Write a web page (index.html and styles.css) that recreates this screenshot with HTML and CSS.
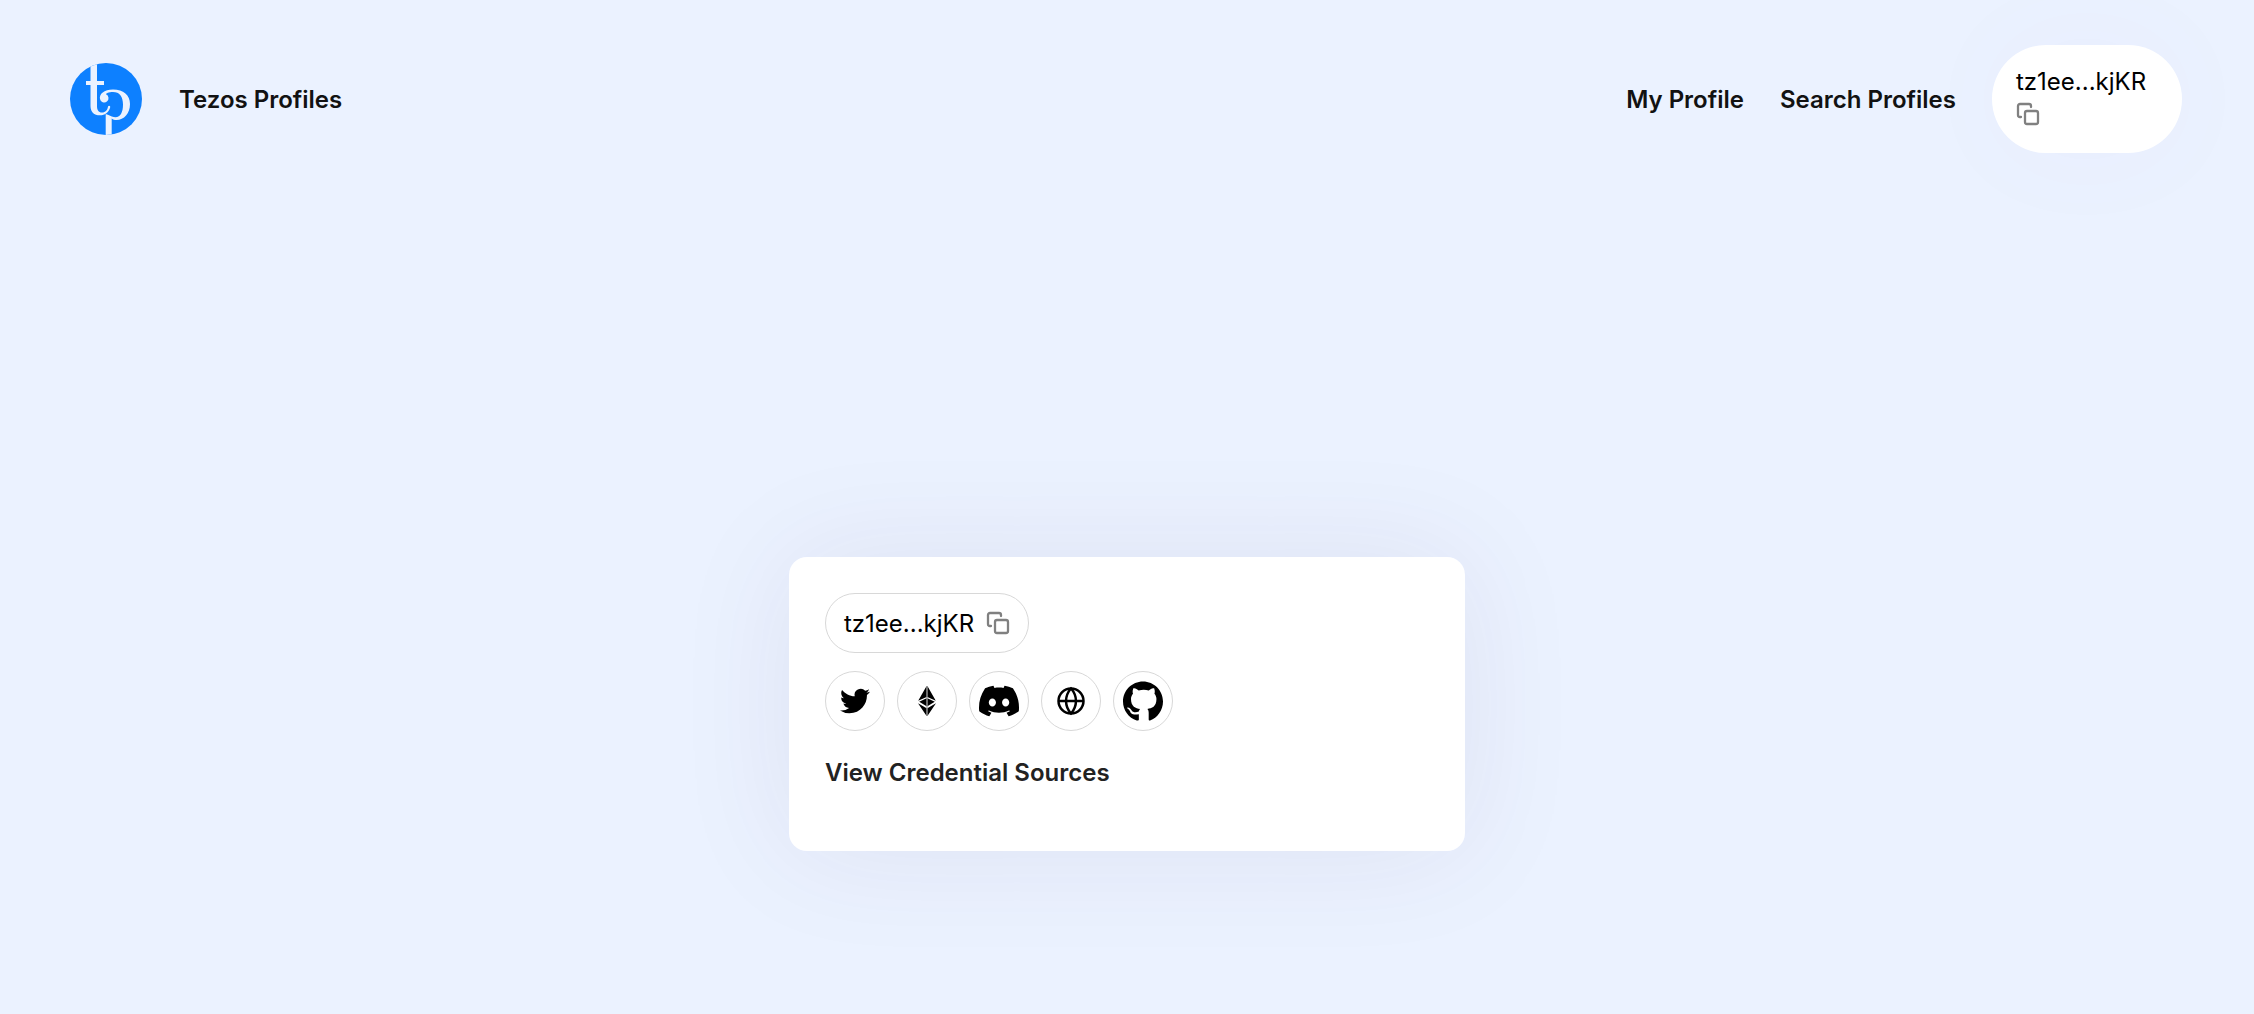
FILE: index.html
```
<!DOCTYPE html>
<html lang="en">
  <head>
    <meta charset="UTF-8" />
    <meta name="viewport" content="width=device-width, initial-scale=1.0" />
    <title>Tezos Profiles</title>
    <link rel="stylesheet" href="styles.css">
  </head>
  <body>
    <svg class="sprite" aria-hidden="true">
      <symbol id="icon-copy" viewBox="0 0 24 24">
        <g fill="none" stroke="currentColor" stroke-width="2.3" stroke-linecap="round" stroke-linejoin="round">
          <rect x="9" y="9" width="13" height="13" rx="2" />
          <path d="M5 15H4a2 2 0 0 1-2-2V4a2 2 0 0 1 2-2h9a2 2 0 0 1 2 2v1" />
        </g>
      </symbol>
    </svg>

    <header class="header">
      <a class="brand" href="#">
        <svg class="brand-logo" viewBox="0 0 72 72" aria-hidden="true">
          <defs>
            <clipPath id="disc"><circle cx="36" cy="36" r="36" /></clipPath>
          </defs>
          <circle class="logo-disc" cx="36" cy="36" r="36" />
          <g class="logo-mark" clip-path="url(#disc)">
            <path d="M20.500 0H27V43C27 47 28.500 49.500 32 49.500C35.500 49.500 37.500 47 38 43.500C38.500 42 41 42.500 40 45C38.500 49.500 35 52.300 30 52.300C24 52.300 20.500 49 20.500 43Z" />
            <rect x="16" y="18" width="18" height="4" />
            <path d="M30 36C29 31 34 26.500 43 26.500C53.500 26.500 60 32 60 41C60 50.500 54 57 46.500 57C44.500 57 43 56.500 41.700 55.500V72H35.700V51L38.500 52C40.500 53 43 54.300 45.500 54.300C50.500 54.300 53 49 53 41.500C53 33.500 49.500 29 43 29C38.500 29 36 30.300 36 31.300A4.300 4.300 0 1 1 30 36Z" />
          </g>
        </svg>
        <span>Tezos Profiles</span>
      </a>
      <nav class="nav">
        <a href="#">My Profile</a>
        <a href="#">Search Profiles</a>
        <button class="account" type="button">
          <span>tz1ee...kjKR</span>
          <svg class="icon-copy" aria-hidden="true"><use href="#icon-copy" /></svg>
        </button>
      </nav>
    </header>

    <main class="main">
      <section class="card">
        <button class="address" type="button">
          <span>tz1ee...kjKR</span>
          <svg class="icon-copy" aria-hidden="true"><use href="#icon-copy" /></svg>
        </button>

        <div class="socials">
          <a class="social" href="#" aria-label="Twitter">
            <svg class="icon-medium" viewBox="0 0 24 24">
              <path d="M23.953 4.57a10 10 0 01-2.825.775 4.958 4.958 0 002.163-2.723c-.951.555-2.005.959-3.127 1.184a4.92 4.92 0 00-8.384 4.482C7.69 8.095 4.067 6.13 1.64 3.162a4.822 4.822 0 00-.666 2.475c0 1.71.87 3.213 2.188 4.096a4.904 4.904 0 01-2.228-.616v.06a4.923 4.923 0 003.946 4.827 4.996 4.996 0 01-2.212.085 4.936 4.936 0 004.604 3.417 9.867 9.867 0 01-6.102 2.105c-.39 0-.779-.023-1.17-.067a13.995 13.995 0 007.557 2.209c9.053 0 13.998-7.496 13.998-13.985 0-.21 0-.42-.015-.63A9.935 9.935 0 0024 4.59z" />
            </svg>
          </a>
          <a class="social" href="#" aria-label="Ethereum">
            <svg class="icon-medium" viewBox="0 0 30 30">
              <path d="M14.600 0V11L6.200 14.700ZM15.400 0V11L23.800 14.700ZM14.600 12.200V20.300L7.200 15.800ZM15.400 12.200V20.300L22.800 15.800ZM14.600 22.300V30L6 17.200ZM15.400 22.300V30L24 17.200Z" />
              <path class="eth-line" d="M15 0V30" />
            </svg>
          </a>
          <a class="social" href="#" aria-label="Discord">
            <svg class="icon-large" viewBox="0 0 24 24">
              <path d="M20.317 4.3698a19.7913 19.7913 0 00-4.8851-1.5152.0741.0741 0 00-.0785.0371c-.211.3753-.4447.8648-.6083 1.2495-1.8447-.2762-3.68-.2762-5.4868 0-.1636-.3933-.4058-.8742-.6177-1.2495a.077.077 0 00-.0785-.037 19.7363 19.7363 0 00-4.8852 1.515.0699.0699 0 00-.0321.0277C.5334 9.0458-.319 13.5799.0992 18.0578a.0824.0824 0 00.0312.0561c2.0528 1.5076 4.0413 2.4228 5.9929 3.0294a.0777.0777 0 00.0842-.0276c.4616-.6304.8731-1.2952 1.226-1.9942a.076.076 0 00-.0416-.1057c-.6528-.2476-1.2743-.5495-1.8722-.8923a.077.077 0 01-.0076-.1277c.1258-.0943.2517-.1923.3718-.2914a.0743.0743 0 01.0776-.0105c3.9278 1.7933 8.18 1.7933 12.0614 0a.0739.0739 0 01.0785.0095c.1202.099.246.1981.3728.2924a.077.077 0 01-.0066.1276 12.2986 12.2986 0 01-1.873.8914.0766.0766 0 00-.0407.1067c.3604.698.7719 1.3628 1.225 1.9932a.076.076 0 00.0842.0286c1.961-.6067 3.9495-1.5219 6.0023-3.0294a.077.077 0 00.0313-.0552c.5004-5.177-.8382-9.6739-3.5485-13.6604a.061.061 0 00-.0312-.0286zM8.02 15.3312c-1.1825 0-2.1569-1.0857-2.1569-2.419 0-1.3332.9555-2.4189 2.157-2.4189 1.2108 0 2.1757 1.0952 2.1568 2.419 0 1.3332-.9555 2.4189-2.1569 2.4189zm7.9748 0c-1.1825 0-2.1569-1.0857-2.1569-2.419 0-1.3332.9554-2.4189 2.1569-2.4189 1.2108 0 2.1757 1.0952 2.1568 2.419 0 1.3332-.946 2.4189-2.1568 2.4189Z" />
            </svg>
          </a>
          <a class="social" href="#" aria-label="Website">
            <svg class="icon-medium icon-line" viewBox="0 0 24 24">
              <circle cx="12" cy="12" r="10" />
              <path d="M2 12h20M12 2a15.300 15.300 0 0 1 4 10 15.300 15.300 0 0 1-4 10 15.300 15.300 0 0 1-4-10 15.300 15.300 0 0 1 4-10z" />
            </svg>
          </a>
          <a class="social" href="#" aria-label="GitHub">
            <svg class="icon-large" viewBox="0 0 24 24">
              <path d="M12 .297c-6.63 0-12 5.373-12 12 0 5.303 3.438 9.8 8.205 11.385.6.113 1.300 .2 1.300-.577V19.900c-3.900 .9-4.900-.7-5.300-1.800-.3-.7-.8-1.200-1.300-1.500-.5-.3-.9-.7 0-.729 1.205.084 1.700.9 2.100 1.500 1.070 1.835 2.900 1.600 4.500 1 .108-.776.417-1.305.76-1.605-2.665-.3-5.466-1.332-5.466-5.93 0-1.310.465-2.380 1.235-3.220-.135-.303-.54-1.523.105-3.176 0 0 1.005-.322 3.300 1.230.96-.267 1.980-.399 3-.405 1.020.006 2.040.138 3 .405 2.280-1.552 3.285-1.230 3.285-1.230.645 1.653.24 2.873.12 3.176.765.84 1.230 1.910 1.230 3.220 0 4.610-2.805 5.625-5.475 5.920.42.36.81 1.096.81 2.220V23.105c0 .315.21.69.825.57C20.565 22.092 24 17.592 24 12.297c0-6.627-5.373-12-12-12" />
            </svg>
          </a>
        </div>

        <button class="sources" type="button">View Credential Sources</button>
      </section>
    </main>
  </body>
</html>
```

FILE: styles.css
```
* {
  margin: 0;
  padding: 0;
  box-sizing: border-box;
}

body {
  min-height: 100vh;
  background: #ebf2ff;
  color: #121212;
  font-family: Inter, "Liberation Sans", sans-serif;
  font-size: 24px;
  line-height: 31px;
}

a {
  color: inherit;
  text-decoration: none;
}

button {
  border: none;
  background: none;
  color: inherit;
  font: inherit;
  text-align: left;
  cursor: pointer;
}

svg {
  display: block;
  flex-shrink: 0;
}

.sprite {
  display: none;
}

.header {
  display: flex;
  align-items: center;
  justify-content: space-between;
  padding: 45px 72px 45px 70px;
  font-weight: 600;
}

.brand {
  display: flex;
  align-items: center;
  gap: 37px;
}

.brand-logo {
  width: 72px;
  height: 72px;
}

.logo-disc {
  fill: #0d80ff;
}

.logo-mark {
  fill: #ebf2ff;
}

.nav {
  display: flex;
  align-items: center;
  gap: 36px;
}

.account {
  display: flex;
  flex-direction: column;
  gap: 5px;
  min-width: 190px;
  padding: 21px 24px 27px;
  border-radius: 54px;
  background: white;
  box-shadow: 0 0 120px rgba(120, 60, 200, 0.03);
  color: black;
  font-weight: 400;
}

.icon-copy {
  width: 24px;
  height: 24px;
  color: #808080;
}

.main {
  display: flex;
  justify-content: center;
  padding: 359px 36px 72px;
}

.card {
  width: 100%;
  max-width: 676px;
  padding: 36px 36px 60px;
  border-radius: 18px;
  background: white;
  box-shadow: 0 0 120px rgba(80, 40, 90, 0.08);
}

.address {
  display: flex;
  align-items: center;
  gap: 12px;
  height: 60px;
  padding: 0 18px;
  border: 1px solid #d8d8d8;
  border-radius: 30px;
  color: black;
}

.socials {
  display: flex;
  flex-wrap: wrap;
  gap: 12px;
  margin: 18px 0 24px;
}

.social {
  display: flex;
  align-items: center;
  justify-content: center;
  width: 60px;
  height: 60px;
  border: 1px solid #d8d8d8;
  border-radius: 50%;
  color: black;
}

.social svg {
  fill: currentColor;
}

.icon-medium {
  width: 30px;
  height: 30px;
}

.icon-large {
  width: 40px;
  height: 40px;
}

.social .icon-line {
  fill: none;
  stroke: currentColor;
  stroke-width: 2;
}

.eth-line {
  stroke: #777;
  stroke-width: 1;
}

.sources {
  display: block;
  line-height: 36px;
  color: #222;
  font-weight: 600;
}
```
